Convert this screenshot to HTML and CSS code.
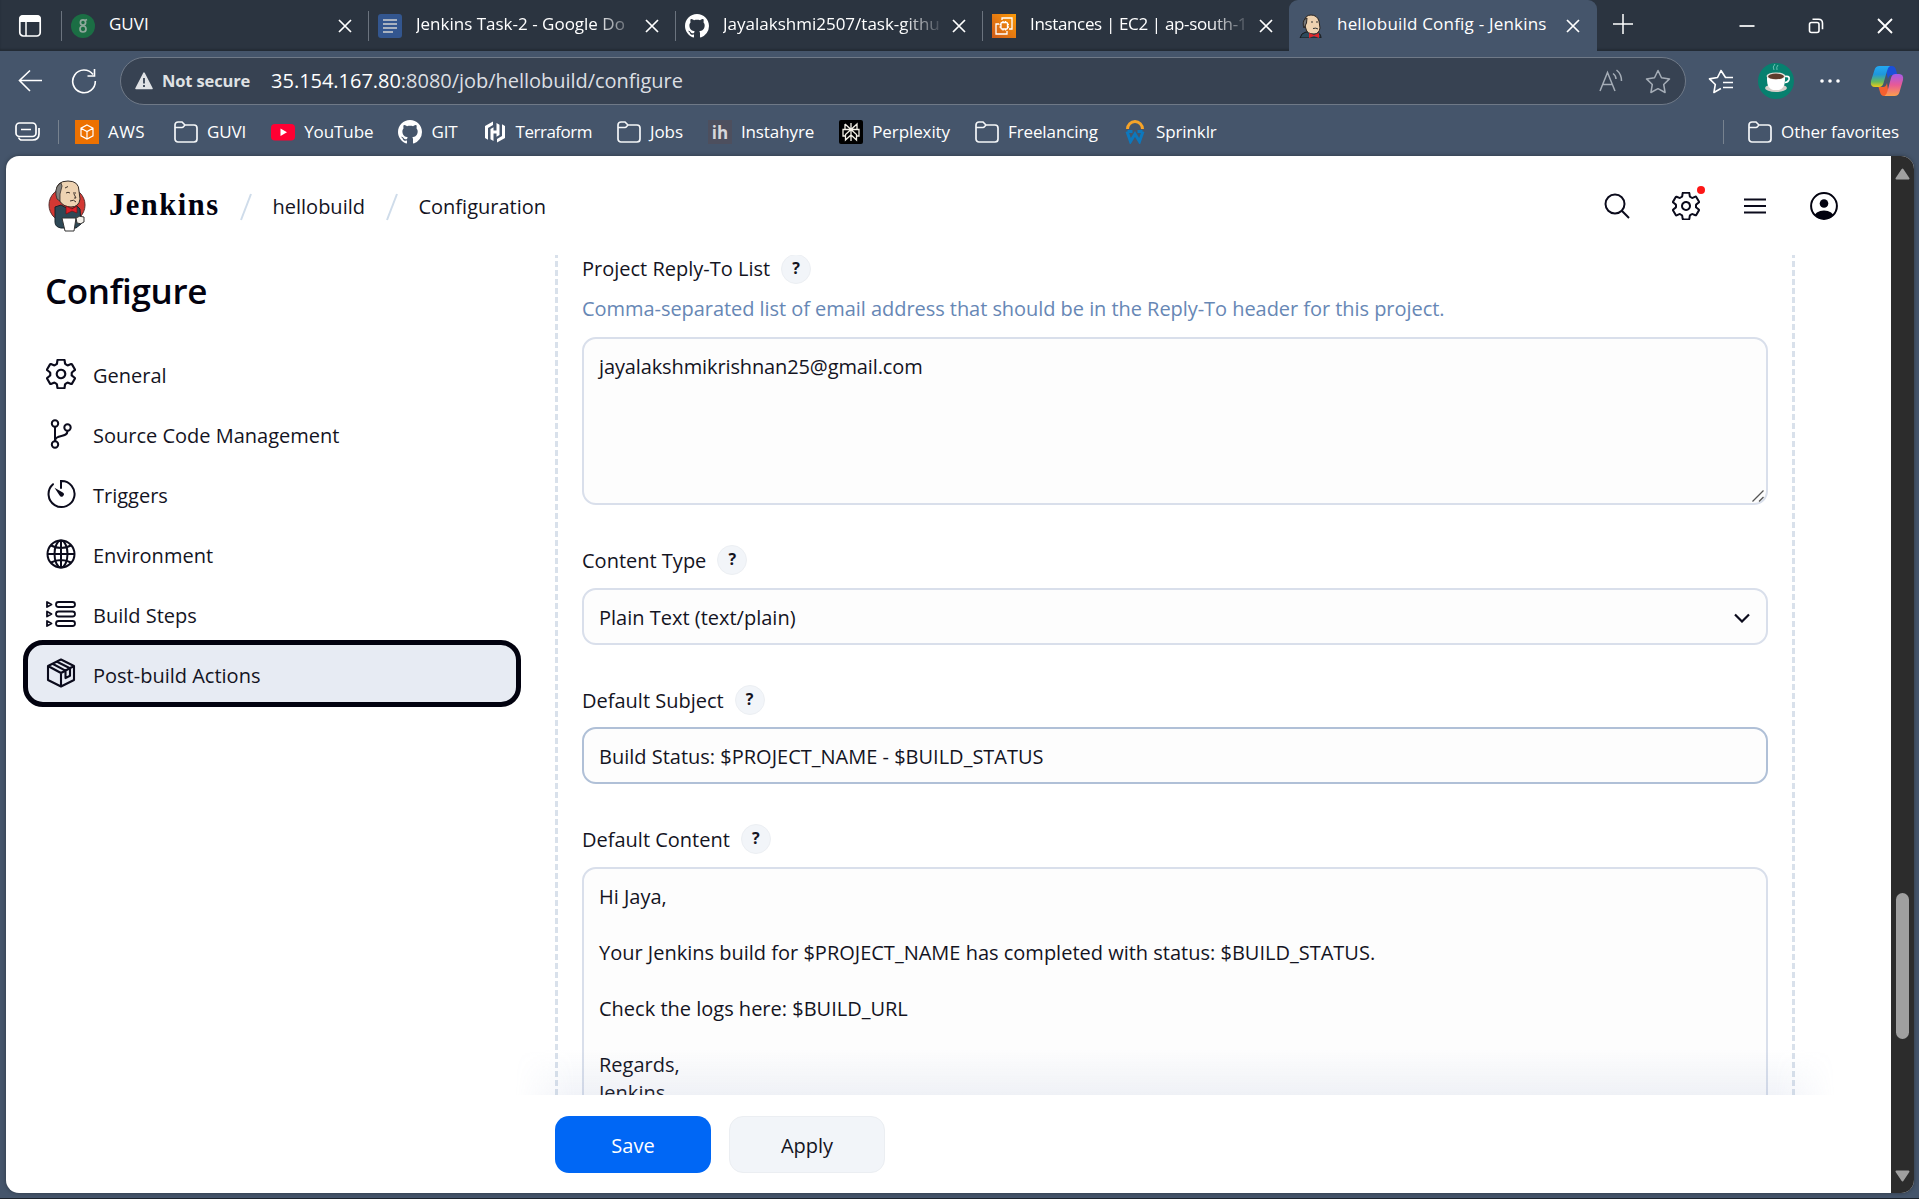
FILE: index.html
```html
<!DOCTYPE html>
<html lang="en">
<head>
<meta charset="utf-8">
<title>hellobuild Config - Jenkins</title>
<link rel="stylesheet" href="styles.css">
</head>
<body>
<svg class="defs" width="0" height="0" aria-hidden="true">
  <symbol id="x" viewBox="0 0 16 16"><path d="M2 2l12 12M14 2L2 14" fill="none" stroke="#fff" stroke-width="1.7"/></symbol>
  <symbol id="folder" viewBox="0 0 24 24"><path d="M1 5a3 3 0 0 1 3-3h4l3 3h9a3 3 0 0 1 3 3v11a3 3 0 0 1-3 3H4a3 3 0 0 1-3-3zM1.500 7.500h6.500q1 0 3-2.500" fill="none" stroke="#f4f6f8" stroke-width="1.700"/></symbol>
  <symbol id="github" viewBox="0 0 16 16"><path fill="#fff" d="M8 0C3.58 0 0 3.58 0 8c0 3.54 2.29 6.53 5.47 7.59.4.07.55-.17.55-.38 0-.19-.01-.82-.01-1.49-2.01.37-2.53-.49-2.69-.94-.09-.23-.48-.94-.82-1.13-.28-.15-.68-.52-.01-.53.63-.01 1.08.58 1.23.82.72 1.21 1.87.87 2.33.66.07-.52.28-.87.51-1.07-1.78-.2-3.64-.89-3.64-3.95 0-.87.31-1.59.82-2.15-.08-.2-.36-1.02.08-2.12 0 0 .67-.21 2.2.82.64-.18 1.32-.27 2-.27.68 0 1.36.09 2 .27 1.53-1.04 2.2-.82 2.2-.82.44 1.1.16 1.92.08 2.12.51.56.82 1.27.82 2.15 0 3.07-1.87 3.75-3.65 3.95.29.25.54.73.54 1.48 0 1.07-.01 1.93-.01 2.2 0 .21.15.46.55.38A8.012 8.012 0 0 0 16 8c0-4.42-3.58-8-8-8z"/></symbol>
  <symbol id="gear" viewBox="32 32 448 448"><path fill="none" stroke="#0b0b1c" stroke-width="32" stroke-linejoin="round" d="M262.290 192.310a64 64 0 1057.400 57.400 64.130 64.130 0 00-57.400-57.400zM416.390 256a154.340 154.340 0 01-1.530 20.790l45.210 35.460a10.810 10.810 0 012.450 13.750l-42.770 74a10.810 10.810 0 01-13.140 4.590l-44.900-18.080a16.110 16.110 0 00-15.170 1.750A164.480 164.480 0 01325 400.800a15.940 15.940 0 00-8.820 12.140l-6.730 47.890a11.080 11.080 0 01-10.680 9.170h-85.540a11.110 11.110 0 01-10.690-8.870l-6.720-47.820a16.070 16.070 0 00-9-12.220 155.300 155.300 0 01-21.460-12.570 16 16 0 00-15.110-1.710l-44.890 18.070a10.810 10.810 0 01-13.140-4.580l-42.770-74a10.800 10.800 0 012.450-13.750l38.210-30a16.050 16.050 0 006-14.080c-.36-4.170-.58-8.330-.58-12.500s.21-8.270.58-12.350a16 16 0 00-6.070-13.940l-38.190-30A10.810 10.810 0 0149.480 186l42.770-74a10.810 10.810 0 0113.140-4.590l44.900 18.080a16.110 16.110 0 0015.170-1.750A164.480 164.480 0 01187 111.200a15.940 15.940 0 008.820-12.140l6.730-47.890A11.080 11.080 0 01213.230 42h85.540a11.110 11.110 0 0110.690 8.870l6.720 47.820a16.070 16.070 0 009 12.220 155.300 155.300 0 0121.460 12.570 16 16 0 0015.110 1.710l44.890-18.070a10.810 10.810 0 0113.140 4.580l42.770 74a10.800 10.800 0 01-2.450 13.750l-38.210 30a16.050 16.050 0 00-6.050 14.080c.33 4.140.55 8.300.55 12.470z"/></symbol>
</svg>

<header class="tabstrip">
  <div class="workspaces"><svg width="24" height="24" viewBox="0 0 24 24"><rect x="1.800" y="2" width="20.400" height="20" rx="3.500" fill="none" stroke="#fff" stroke-width="1.700"/><path d="M1 8V5a4 4 0 0 1 4-4h14a4 4 0 0 1 4 4v3z" fill="#fff"/><path d="M8 8v14" stroke="#fff" stroke-width="1.500"/></svg></div>
  <div class="tab">
    <svg class="fav" viewBox="0 0 24 24"><circle cx="12" cy="12" r="12" fill="#1b6e44"/><g fill="none" stroke="#8fa89c" stroke-width="1.700"><circle cx="12" cy="8.500" r="2.600"/><circle cx="12" cy="15" r="3"/><path d="M14 6.500l2-1"/></g></svg>
    <span class="title">GUVI</span><svg class="close"><use href="#x"/></svg>
  </div>
  <div class="tab">
    <svg class="fav" viewBox="0 0 24 24"><rect width="24" height="24" rx="3" fill="#33568f"/><path d="M5 6h14M5 10h14M5 14h14M5 18h10" stroke="#a9b2bf" stroke-width="2.200"/></svg>
    <span class="title fade">Jenkins Task-2 - Google Do</span><svg class="close"><use href="#x"/></svg>
  </div>
  <div class="tab">
    <svg class="fav"><use href="#github"/></svg>
    <span class="title fade">Jayalakshmi2507/task-githu</span><svg class="close"><use href="#x"/></svg>
  </div>
  <div class="tab">
    <svg class="fav" viewBox="0 0 24 24"><defs><linearGradient id="o" x1="0" y1="1" x2="1" y2="0"><stop stop-color="#cf5a18"/><stop offset="1" stop-color="#fb9a08"/></linearGradient></defs><rect width="24" height="24" fill="url(#o)"/><g fill="none" stroke="#fff" stroke-width="1.300"><path d="M10 6V4h10v11h-3M7 10H4v10h11v-3"/><rect x="9" y="8.500" width="6.500" height="6.500" rx="1"/><path d="M7.500 10.500h1.500M7.500 13h1.500M15.500 10.500H17M15.500 13H17M11 7v1.500M13.500 7v1.500M11 15v1.500M13.500 15v1.500"/></g></svg>
    <span class="title fade ec2">Instances | EC2 | ap-south-1</span><svg class="close"><use href="#x"/></svg>
  </div>
  <div class="tab active">
    <svg class="fav" viewBox="0 0 24 24"><path d="M1 24q1-5 6-6h10q5 1 5 6z" fill="#2d4a5c" stroke="#181818"/><path d="M5 8q1-7 7-7t8 6l1 7q-1 6-6 6-7 0-8-5z" fill="#eed2b0" stroke="#2a2522"/><path d="M5 14q-2-6 1-9l2-1-.5 5z" fill="#777" stroke="#2a2522"/><path d="M12 8h2M17 8h2M14 14.500q3-1 5 .5" stroke="#333" fill="none"/><path d="M10 19l5 2 5-2v5l-5-2-5 2z" fill="#e0262b"/></svg>
    <span class="title">hellobuild Config - Jenkins</span><svg class="close"><use href="#x"/></svg>
  </div>
  <svg class="plus" width="22" height="22" viewBox="0 0 22 22"><path d="M11 1v20M1 11h20" stroke="#fff" stroke-width="1.500"/></svg>
  <div class="winctl">
    <svg width="16" height="16" viewBox="0 0 16 16"><path d="M.5 8h15" stroke="#fff" stroke-width="1.700"/></svg>
    <svg width="16" height="16" viewBox="0 0 16 16"><g fill="none" stroke="#fff" stroke-width="1.600"><rect x="1.500" y="4.500" width="9.500" height="10" rx="2"/><path d="M4.500 1.300h6q4 0 4 4v6"/></g></svg>
    <svg width="16" height="16" viewBox="0 0 16 16"><path d="M1 1l14 14M15 1L1 15" stroke="#fff" stroke-width="1.800"/></svg>
  </div>
</header>

<nav class="toolbar">
  <svg class="back" width="24" height="24" viewBox="0 0 24 24"><path d="M24 11.500H1.500M12 1.500l-10.500 10L12 22" fill="none" stroke="#fff" stroke-width="1.600"/></svg>
  <svg class="reload" width="26" height="26" viewBox="0 0 26 26"><path d="M22 6.500A11.300 11.300 0 1 0 24.300 13M23.500 1v7h-7" fill="none" stroke="#fff" stroke-width="1.600"/></svg>
  <div class="address">
    <svg width="18" height="18" viewBox="0 0 18 18"><path d="M9 1.200L17 16.500H1z" fill="#e0e2e5" stroke="#e0e2e5" stroke-width="1.600" stroke-linejoin="round"/><path d="M9 6v5.500M9 13v2" stroke="#374252" stroke-width="1.800"/></svg>
    <span class="notsecure">Not secure</span>
    <span class="url"><b>35.154.167.80</b>:8080/job/hellobuild/configure</span>
    <svg class="aloud" width="24" height="24" viewBox="0 0 24 24"><g fill="none" stroke="#a5adb7" stroke-width="1.500"><path d="M1 22L8.500 3.500 16 22M3.800 15.500h9.500M14 4.500q3 2 3 5.500M17.500 1q5 4 5 11"/></g></svg>
    <svg class="star" width="26" height="25" viewBox="0 0 26 25"><path d="M13 1.500l3.500 7.300 8 1.100-5.800 5.600 1.400 8-7.100-3.800-7.100 3.800 1.400-8L1.500 9.900l8-1.100z" fill="none" stroke="#a5adb7" stroke-width="1.500" stroke-linejoin="round"/></svg>
  </div>
  <svg class="favs" width="26" height="25" viewBox="0 0 26 25"><path d="M25 8.500h-7.500L13 1.500 9.500 8.500 1.500 9.900l5.800 5.600-1.400 8 7-4M15 13.500h10M15 18.500h10" fill="none" stroke="#fff" stroke-width="1.600" stroke-linejoin="round"/></svg>
  <svg class="avatar" width="36" height="36" viewBox="0 0 36 36"><circle cx="18" cy="18" r="18" fill="#07806f"/><path d="M16 7q-2-3 1-6M19 7q-1-3 1-5" stroke="#6cc0b2" fill="none"/><ellipse cx="18" cy="25" rx="11" ry="4" fill="#d5cfca"/><path d="M9 13h18v4q0 8-6 10h-6q-6-2-6-10z" fill="#fff"/><path d="M27 13.500q5-1 4 3-1 3-4 3" fill="none" stroke="#fff" stroke-width="1.700"/><ellipse cx="18" cy="13" rx="9.500" ry="3.600" fill="#e8e1dc"/><ellipse cx="18" cy="13.400" rx="8" ry="2.800" fill="#5e3c2c"/></svg>
  <svg class="dots" width="22" height="6" viewBox="0 0 22 6"><g fill="#fff"><circle cx="3" cy="3" r="1.800"/><circle cx="11" cy="3" r="1.800"/><circle cx="19" cy="3" r="1.800"/></g></svg>
  <svg class="copilot" width="34" height="32" viewBox="0 0 34 32"><defs><linearGradient id="c1" x1="0" y1="0" x2="0" y2="1"><stop stop-color="#24a9f2"/><stop offset=".4" stop-color="#1f97dc"/><stop offset=".75" stop-color="#68b95b"/><stop offset="1" stop-color="#f2cb16"/></linearGradient><linearGradient id="c2" x1="0" y1="0" x2="0" y2="1"><stop stop-color="#a45ae8"/><stop offset=".5" stop-color="#e85a96"/><stop offset="1" stop-color="#fb9f4c"/></linearGradient></defs><path d="M15 1h7q3 0 4 4l1.500 5H22q-3 0-4 4z" fill="#1b50d8"/><path d="M19 31h-5q-3 0-4-4l-1.500-5h4.500q3 0 4-4z" fill="#f4602f"/><path d="M9.500 1H20q-2 1-3 5l-3.500 12q-1 4-4.500 4H5q-5 0-4-6L4.500 5q1-4 5-4z" fill="url(#c1)"/><path d="M24.500 31H14.500q2-1 3-5L21 13q1-4 4.500-4H29q5 0 4 6l-3.500 12q-1 4-5 4z" fill="url(#c2)"/></svg>
</nav>

<nav class="bookmarks">
  <svg class="stack" width="26" height="22" viewBox="0 0 26 22"><g fill="none" stroke="#fff" stroke-width="1.700"><rect x="1" y="2" width="20" height="13.500" rx="3.500"/><path d="M6 8.500h10M5 19h12.500q6.500 0 6.500-6V7M3.500 16.500q1 2.500 3 2.500"/></g></svg>
  <i class="sep"></i>
  <a class="bm aws"><svg viewBox="0 0 24 24"><rect width="24" height="24" fill="#ed7100"/><path d="M12 5l6 3.200v7.600L12 19l-6-3.200V8.200zM6 8.200l6 3.300 6-3.300M12 11.500V19" fill="none" stroke="#fff" stroke-width="1.200"/></svg>AWS</a>
  <a class="bm"><svg><use href="#folder"/></svg>GUVI</a>
  <a class="bm"><svg viewBox="0 0 24 24"><rect y="4" width="24" height="16.500" rx="4" fill="#ff0033"/><path d="M9.500 8.500v7.500l6.500-3.700z" fill="#fff"/></svg>YouTube</a>
  <a class="bm"><svg><use href="#github"/></svg>GIT</a>
  <a class="bm terraform"><svg viewBox="0 0 24 24"><path d="M10 1.500L2 6v12l3 1.700V8l5-3zM14 22.500l8-4.500V6l-3-1.700V16l-5 3zM7.500 9l3-1.700v3.200h3V3l3 1.700V15l-3 1.700v-3.200h-3V21l-3-1.700z" fill="#fff"/></svg>Terraform</a>
  <a class="bm"><svg><use href="#folder"/></svg>Jobs</a>
  <a class="bm"><span class="ih">ih</span>Instahyre</a>
  <a class="bm"><svg viewBox="0 0 24 24"><rect width="24" height="24" rx="2" fill="#000"/><g fill="none" stroke="#f3f0e6" stroke-width="1.300"><path d="M12 3v18M6 4l6 5.500L18 4v5.500M6 4v5.500M12 9.500l-5.500 5V20l5.500-5 5.500 5v-5.500zM6.500 16H4V9.500h16V16h-2.500"/></g></svg>Perplexity</a>
  <a class="bm"><svg><use href="#folder"/></svg>Freelancing</a>
  <a class="bm"><svg viewBox="0 0 24 24"><path d="M4.500 9a7.500 7.500 0 0 1 15 0" fill="none" stroke="#f7a428" stroke-width="3"/><path d="M4 11.500l3.500 10L12 14l4.500 7.500 3.500-10M4.500 11.500h5M14.500 11.500h5" fill="none" stroke="#0d78bd" stroke-width="3"/></svg>Sprinklr</a>
  <span class="grow"></span>
  <i class="sep"></i>
  <a class="bm last"><svg><use href="#folder"/></svg>Other favorites</a>
</nav>

<div class="viewport">
  <div class="page">
    <header class="head">
      <svg class="logo" width="38" height="52" viewBox="0 0 38 52"><ellipse cx="19" cy="25" rx="18" ry="17.500" fill="#d33833" stroke="#54302f"/><path d="M7 27l6-2 9 5 7-4 3 3 1 15-5 4H13q-6-1-6-6z" fill="#2d4856" stroke="#17222a"/><path d="M8 12Q8 1 20 1q11 0 11 10l1 8q-1 8-9 8-8 0-12-7z" fill="#eed3b2" stroke="#332c28"/><path d="M8 15q-1-9 5-12l1 3-2 8v7q-4-1-4-6z" fill="#83817e" stroke="#332c28" stroke-width=".8"/><path d="M18 13q2-1.500 4 0M25 13h3M26 14l2 4h-2M22 21q4-2 6 1M17 8l3-1.500" fill="none" stroke="#3e332c"/><path d="M18 26l6 3 5-3v7l-5-2-6 3z" fill="#e12029" stroke="#701214" stroke-width=".7"/><path d="M14 38h14l-2 13H17z" fill="#fff" stroke="#333"/><path d="M28 38q3-3 8-1v5q-3 3-7 1z" fill="#f5f2ec" stroke="#333"/></svg>
      <span class="brand">Jenkins</span>
      <svg class="slash" width="12" height="28" viewBox="0 0 12 28"><path d="M11 1L1 27" stroke="#cfdcea" stroke-width="2"/></svg>
      <span class="crumb">hellobuild</span>
      <svg class="slash" width="12" height="28" viewBox="0 0 12 28"><path d="M11 1L1 27" stroke="#cfdcea" stroke-width="2"/></svg>
      <span class="crumb">Configuration</span>
      <div class="actions">
        <svg width="28" height="28" viewBox="0 0 28 28"><g fill="none" stroke="#0b0b1c" stroke-width="2"><circle cx="12" cy="12" r="9.500"/><path d="M18.800 18.800l7.200 7.200"/></g></svg>
        <span class="gearbox"><svg width="28" height="28"><use href="#gear"/></svg><i class="dot"></i></span>
        <svg width="28" height="28" viewBox="0 0 28 28"><path d="M3 7.500h22M3 14h22M3 20.500h22" stroke="#0b0b1c" stroke-width="2"/></svg>
        <svg width="28" height="28" viewBox="0 0 28 28"><defs><clipPath id="u"><circle cx="14" cy="14" r="13"/></clipPath></defs><circle cx="14" cy="14" r="12.900" fill="none" stroke="#02020f" stroke-width="2"/><circle cx="14" cy="11.500" r="4.300" fill="#02020f"/><ellipse cx="14" cy="25" rx="10" ry="6.500" fill="#02020f" clip-path="url(#u)"/></svg>
      </div>
    </header>
    <div class="body">
      <aside class="side">
        <h1>Configure</h1>
        <a class="item"><svg width="30" height="30"><use href="#gear"/></svg>General</a>
        <a class="item"><svg width="30" height="30" viewBox="0 0 30 30"><g fill="none" stroke="#0b0b1c" stroke-width="2"><circle cx="9" cy="4.500" r="3.200"/><circle cx="9" cy="25.500" r="3.200"/><circle cx="21.500" cy="8.500" r="3.200"/><path d="M9 8v14.500c0-8 12.500-3 12.500-10.500"/></g></svg>Source Code Management</a>
        <a class="item"><svg width="30" height="30" viewBox="0 0 30 30"><path d="M7 5.200A13 13 0 1 0 15 2v7" fill="none" stroke="#0b0b1c" stroke-width="2" stroke-linecap="round"/><path d="M8.500 8.700l8.300 4.700a2.300 2.300 0 1 1-3.200 3.200z" fill="#0b0b1c"/></svg>Triggers</a>
        <a class="item"><svg width="30" height="30" viewBox="0 0 30 30"><g fill="none" stroke="#0b0b1c" stroke-width="2"><circle cx="15" cy="15" r="13.500"/><ellipse cx="15" cy="15" rx="6.500" ry="13.500"/><path d="M15 1.500v27M1.500 15h27M5 6.500q10 5 20 0M5 23.500q10-5 20 0"/></g></svg>Environment</a>
        <a class="item"><svg width="30" height="30" viewBox="0 0 30 30"><g fill="none" stroke="#0b0b1c" stroke-width="1.800" stroke-linejoin="round"><rect x="10" y="3" width="19" height="5" rx="2.500"/><rect x="10" y="12.500" width="19" height="5" rx="2.500"/><rect x="10" y="22" width="19" height="5" rx="2.500"/><path d="M1 3l4.500 2.500L1 8zM1 12.500L5.500 15 1 17.500zM1 22l4.500 2.500L1 27z"/></g></svg>Build Steps</a>
        <a class="item selected"><svg width="30" height="30" viewBox="0 0 30 30"><g fill="none" stroke="#0b0b1c" stroke-width="2.100" stroke-linejoin="round"><path d="M15 1.500l13 6.500v14l-13 6.500L2 22V8zM2 8l13 7 13-7M15 15v13.500M6.500 5.800l13 6.800v7.500l4.500-2.400v-7.500l-13-6.500"/></g></svg>Post-build Actions</a>
      </aside>
      <main class="main">
        <div class="scroller">
          <section class="group">
            <div class="field">
              <div class="label"><span>Project Reply-To List</span><b class="help">?</b></div>
              <p class="desc">Comma-separated list of email address that should be in the Reply-To header for this project.</p>
              <div class="input area">jayalakshmikrishnan25@gmail.com<svg class="grip" width="12" height="12" viewBox="0 0 12 12"><path d="M.5 11.500l11-11M7 11.500L11.500 7" stroke="#555" stroke-width="1.300"/></svg></div>
            </div>
            <div class="field">
              <div class="label"><span>Content Type</span><b class="help">?</b></div>
              <div class="input line">Plain Text (text/plain)<svg width="16" height="10" viewBox="0 0 16 10"><path d="M1 1.500l7 7 7-7" fill="none" stroke="#0b0b1c" stroke-width="2.200"/></svg></div>
            </div>
            <div class="field subject">
              <div class="label"><span>Default Subject</span><b class="help">?</b></div>
              <div class="input line">Build Status: $PROJECT_NAME - $BUILD_STATUS</div>
            </div>
            <div class="field">
              <div class="label"><span>Default Content</span><b class="help">?</b></div>
              <div class="input content">Hi Jaya,

Your Jenkins build for $PROJECT_NAME has completed with status: $BUILD_STATUS.

Check the logs here: $BUILD_URL

Regards,
Jenkins</div>
            </div>
          </section>
          <div class="shade"></div>
        </div>
        <footer class="foot"><button class="btn save">Save</button><button class="btn apply">Apply</button></footer>
      </main>
    </div>
  </div>
  <div class="scrollbar">
    <svg width="15" height="12" viewBox="0 0 15 12"><path d="M7.500 1.500L13.500 10.500h-12z" fill="#a0a0a0" stroke="#a0a0a0" stroke-width="2" stroke-linejoin="round"/></svg>
    <i class="thumb"></i>
    <svg width="15" height="12" viewBox="0 0 15 12"><path d="M7.500 10.500L13.500 1.500h-12z" fill="#a0a0a0" stroke="#a0a0a0" stroke-width="2" stroke-linejoin="round"/></svg>
  </div>
</div>
</body>
</html>
```
FILE: styles.css
```css
* { box-sizing: border-box; }
html, body { margin: 0; height: 1199px; overflow: hidden; }
body {
  display: flex; flex-direction: column;
  background: #45556b;
  border-bottom: 1px solid #1b222b;
  color: #14141f;
  font: 20px/28px "Open Sans", "Noto Sans", sans-serif;
}
svg { display: block; flex: none; }
.defs { position: absolute; }

.tabstrip {
  display: flex; align-items: center;
  height: 51px; flex: none;
  background: #2b3440;
  box-shadow: inset 0 -2px 2px rgba(0, 0, 0, .18);
  color: #fff; font-size: 17px;
}
.workspaces { width: 61px; padding-left: 18px; }
.tab {
  display: flex; align-items: center;
  width: 307px; height: 30px; padding: 0 15px 0 9px;
  border-left: 1.500px solid #6b737e;
}
.tab.active {
  width: 308px; height: 51px; padding: 0 16px 0 10px;
  background: #45556b; border: 0; border-radius: 9px 9px 0 0;
}
.fav { width: 24px; height: 24px; margin-right: 14px; }
.title { flex: 1; overflow: hidden; white-space: nowrap; height: 28px; margin-top: -3px; }
.active .title { letter-spacing: .2px; }
.fade { margin-right: 10px; -webkit-mask-image: linear-gradient(90deg, #000 82%, transparent 102%); mask-image: linear-gradient(90deg, #000 82%, transparent 102%); }
.ec2 { letter-spacing: -.35px; }
.close { width: 16px; height: 16px; }
.plus { margin-left: 15px; margin-top: -4px; }
.winctl { display: flex; gap: 53px; margin-left: auto; padding-right: 26px; }

.toolbar { display: flex; align-items: center; height: 60px; flex: none; padding: 0 15px 0 18px; }
.reload { margin-left: 29px; }
.address {
  display: flex; align-items: center;
  width: 1566px; height: 48px; margin-left: 23px; padding: 0 14px;
  background: #374252; border: 1.500px solid #6f7987; border-radius: 24px;
}
.notsecure { margin-left: 9px; color: #dfe1e4; font-size: 16.500px; font-weight: 700; letter-spacing: -.15px; }
.url { margin-left: 21px; flex: 1; color: #dcdfe3; font-size: 20px; letter-spacing: -.03px; }
.url b { color: #fff; font-weight: 400; }
.star { margin-left: 22px; }
.favs { margin-left: 22px; }
.avatar { margin-left: 24px; }
.dots { margin-left: 25px; }
.copilot { margin-left: auto; }

.bookmarks { display: flex; align-items: center; height: 45px; flex: none; padding: 0 20px 3px 15px; color: #fff; font-size: 17px; }
.sep { width: 1px; height: 24px; background: #77828f; }
.stack + .sep { margin: 0 16px 0 17px; }
.bm { display: flex; align-items: center; gap: 9px; margin-right: 25px; white-space: nowrap; letter-spacing: -.1px; }
.bm svg { width: 24px; height: 24px; }
.bm.aws { letter-spacing: .4px; margin-right: 29px; }
.bm.terraform { letter-spacing: -.5px; }
.bm.last { margin: 0 0 0 24px; }
.ih { width: 24px; height: 24px; background: #4d4f5e; color: #d7d7dc; font-weight: 700; line-height: 26px; text-align: center; }
.grow { flex: 1; }

.viewport { display: flex; height: 1037px; flex: none; margin: 0 5px 0 6px; border-radius: 13px; overflow: hidden; background: #fff; box-shadow: 0 0 4px rgba(0, 0, 0, .35); }
.page { flex: 1; display: flex; flex-direction: column; }
.scrollbar { width: 23px; background: #2c2c2c; display: flex; flex-direction: column; align-items: center; padding: 12px 0 11px; }
.thumb { width: 13px; height: 146px; margin: 713px 0 auto; border-radius: 7px; background: #a0a0a0; }

.head { display: flex; align-items: center; height: 99px; padding: 0 53px 0 42px; }
.brand { width: 110px; margin-left: 23px; margin-top: -2px; color: #02020f; font: bold 30.500px/34px "Liberation Serif", serif; letter-spacing: 1.500px; }
.slash { margin: 2px 20.500px 0 21px; }
.crumb { margin-top: 2px; }
.actions { display: flex; gap: 41px; margin-left: auto; }
.gearbox { position: relative; }
.dot { position: absolute; right: -5px; top: -6px; width: 8px; height: 8px; border-radius: 50%; background: #fd1717; }

.body { display: flex; height: 938px; }
.side { width: 549px; padding-left: 17px; }
h1 { margin: 13px 0 59px 22px; color: #02020f; font-size: 35px; line-height: 46px; font-weight: 600; letter-spacing: -.35px; }
.item { display: flex; align-items: center; gap: 17px; width: 498px; height: 60px; padding: 5px 0 0 23px; line-height: 55px; }
.item svg { margin-top: -4px; }
.item:nth-of-type(1) { margin-top: -30px; }
.selected { height: 67px; margin-top: -3px; padding: 3px 0 0 18px; border: 5px solid #02020f; border-radius: 20px; background: #e7ebf3; }

.main { width: 1240px; }
.scroller { position: relative; height: 840px; margin: 0 -40px; padding: 0 40px; overflow: hidden; }
.group {
  padding: 0 27px;
  background:
    repeating-linear-gradient(#d9e1eb 0 3px, transparent 3px 6px, #d9e1eb 6px 9px) 0 0 / 3px 100% no-repeat,
    repeating-linear-gradient(#d9e1eb 0 3px, transparent 3px 6px, #d9e1eb 6px 9px) 100% 0 / 3px 100% no-repeat;
}
.field { margin-bottom: 40px; }
.label { display: flex; align-items: center; gap: 11px; height: 30px; margin-bottom: 13px; }
.label span { padding-top: 1px; }
.field:first-child .label { height: 27px; margin-bottom: 13px; }
.subject .label { margin-bottom: 12px; }
.help { width: 30px; height: 30px; flex: none; border: 1.500px solid #eceff3; border-radius: 50%; background: #f2f5f9; font-size: 16px; line-height: 27px; text-align: center; }
.desc { margin: 0 0 14px; color: #6787b5; letter-spacing: -.05px; }
.input { border: 2px solid #d9dfeb; border-radius: 14px; background: #fdfdfd; padding: 0 15px; white-space: pre-wrap; }
.area { position: relative; height: 168px; padding-top: 14px; letter-spacing: -.12px; }
.grip { position: absolute; right: 2px; bottom: 1px; }
.line { display: flex; align-items: center; justify-content: space-between; height: 57px; padding: 2px 16px 0 15px; }
.subject .input { border-color: #b0c0d7; }
.content { height: 400px; padding-top: 14px; }
.shade {
  position: absolute; left: 0; right: 0; bottom: 0; height: 46px;
  background: linear-gradient(transparent, rgba(120, 140, 190, .1));
  -webkit-mask-image: linear-gradient(90deg, transparent, #000 60px calc(100% - 60px), transparent);
  mask-image: linear-gradient(90deg, transparent, #000 60px calc(100% - 60px), transparent);
}
.foot { display: flex; gap: 18px; height: 98px; padding-top: 21px; }
.btn { width: 156px; height: 57px; padding: 2px 0 0; border: 0; border-radius: 14px; font: inherit; color: #14141f; }
.save { background: #0067f5; color: #fff; }
.apply { background: #f2f5f9; border: 1.500px solid #ebeef2; }
```
